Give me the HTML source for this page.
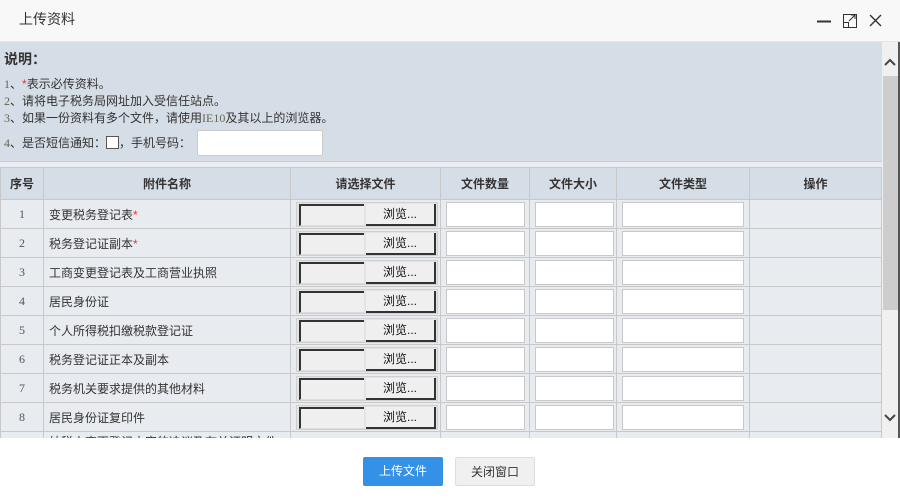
<!DOCTYPE html>
<html><head><meta charset="utf-8"><style>
*{margin:0;padding:0;box-sizing:border-box}
body{width:900px;height:498px;overflow:hidden;background:#fff;font-family:"Liberation Sans","Noto Sans CJK SC",sans-serif;font-size:12px;color:#333;position:relative}
.a{position:absolute}
.title{left:0;top:0;width:900px;height:42px;background:#f8f8f8;border-bottom:1px solid #e5e5e5}
.title span{position:absolute;left:19px;top:9px;font-size:14px;color:#333}
.info{left:0;top:42px;width:882px;height:120px;background:#d5dde6;border-bottom:1px solid #c8cdd3}
.info div{position:absolute;left:4px;font-size:12px;color:#333}
.n{font-family:"Liberation Serif",serif;color:#665}
.star{color:#e33}
.gap{left:0;top:162px;width:882px;height:276px;background:#e9ecf0}
table{position:absolute;left:0;top:167px;border-collapse:collapse;table-layout:fixed}
td,th{border:1px solid #c8c8c8;height:29px;font-size:12px;color:#333;padding:0}
th{background:#d5dde6;font-weight:bold;height:32px}
td{background:#e8ebf0}
td.c{text-align:center;font-family:"Liberation Serif",serif;color:#555}
td.l{padding-left:5px}
tr.last td{vertical-align:top;padding-top:1px}
.fb{display:block;margin-left:5px;width:142px;height:25px;border:1px solid #d0d0d0;background:#e4e4e4;position:relative}
.fb i{position:absolute;left:2px;top:1px;width:65px;height:22px;background:#efefef;border-top:2px solid #333;border-left:2px solid #333;border-bottom:1px solid #ddd}
.fb b{position:absolute;left:69px;top:1px;width:70px;height:22px;background:#efefef;border-right:2px solid #333;border-bottom:2px solid #333;font-weight:normal;text-align:center;line-height:20px;color:#111}
.in{display:block;margin-left:5px;height:25px;background:#fff;border:1px solid #c8c8c8}
.sb{left:882px;top:42px;width:18px;height:396px;background:#f0f0f0;border-right:2px solid #555}
.thumb{left:883px;top:76px;width:15px;height:234px;background:#cdcdcd}
.btn{top:457px;width:80px;height:29px;line-height:29px;text-align:center;font-size:12px;border-radius:2px}
</style></head><body>
<div class="a title"><span>上传资料</span>
<svg class="a" style="left:815px;top:12px" width="70" height="18" viewBox="0 0 70 18">
<path d="M2 9.5H16" stroke="#333" stroke-width="2"/>
<rect x="28.5" y="2.5" width="13" height="13" fill="none" stroke="#333"/>
<rect x="28.5" y="10.5" width="5" height="5" fill="#f8f8f8" stroke="#333"/>
<path d="M34 9L40 3M36 3H40V7" stroke="#333" fill="none"/>
<path d="M55 3L66 14M66 3L55 14" stroke="#333" stroke-width="1.4"/>
</svg></div>
<div class="a info">
<div style="top:7px;font-size:14px;font-weight:bold">说明：</div>
<div style="top:33px"><span class="n">1</span>、<span class="star">*</span>表示必传资料。</div>
<div style="top:50px"><span class="n">2</span>、请将电子税务局网址加入受信任站点。</div>
<div style="top:67px"><span class="n">3</span>、如果一份资料有多个文件，请使用<span class="n">IE10</span>及其以上的浏览器。</div>
<div style="top:92px"><span class="n">4</span>、是否短信通知：<span style="display:inline-block;width:13px;height:13px;background:#fff;border:1px solid #555;vertical-align:-2px"></span>，手机号码：</div>
<div style="left:197px;top:88px;width:126px;height:26px;background:#fff;border:1px solid #ccc"></div>
</div>
<div class="a gap"></div>
<table>
<colgroup><col style="width:43px"><col style="width:247px"><col style="width:150px"><col style="width:89px"><col style="width:87px"><col style="width:133px"><col style="width:132px"></colgroup>
<tr><th>序号</th><th>附件名称</th><th>请选择文件</th><th>文件数量</th><th>文件大小</th><th>文件类型</th><th>操作</th></tr>
<tr><td class="c">1</td><td class="l">变更税务登记表<span class="star">*</span></td><td><span class="fb"><i></i><b>浏览...</b></span></td><td><span class="in" style="width:79px"></span></td><td><span class="in" style="width:79px"></span></td><td><span class="in" style="width:122px"></span></td><td></td></tr>
<tr><td class="c">2</td><td class="l">税务登记证副本<span class="star">*</span></td><td><span class="fb"><i></i><b>浏览...</b></span></td><td><span class="in" style="width:79px"></span></td><td><span class="in" style="width:79px"></span></td><td><span class="in" style="width:122px"></span></td><td></td></tr>
<tr><td class="c">3</td><td class="l">工商变更登记表及工商营业执照</td><td><span class="fb"><i></i><b>浏览...</b></span></td><td><span class="in" style="width:79px"></span></td><td><span class="in" style="width:79px"></span></td><td><span class="in" style="width:122px"></span></td><td></td></tr>
<tr><td class="c">4</td><td class="l">居民身份证</td><td><span class="fb"><i></i><b>浏览...</b></span></td><td><span class="in" style="width:79px"></span></td><td><span class="in" style="width:79px"></span></td><td><span class="in" style="width:122px"></span></td><td></td></tr>
<tr><td class="c">5</td><td class="l">个人所得税扣缴税款登记证</td><td><span class="fb"><i></i><b>浏览...</b></span></td><td><span class="in" style="width:79px"></span></td><td><span class="in" style="width:79px"></span></td><td><span class="in" style="width:122px"></span></td><td></td></tr>
<tr><td class="c">6</td><td class="l">税务登记证正本及副本</td><td><span class="fb"><i></i><b>浏览...</b></span></td><td><span class="in" style="width:79px"></span></td><td><span class="in" style="width:79px"></span></td><td><span class="in" style="width:122px"></span></td><td></td></tr>
<tr><td class="c">7</td><td class="l">税务机关要求提供的其他材料</td><td><span class="fb"><i></i><b>浏览...</b></span></td><td><span class="in" style="width:79px"></span></td><td><span class="in" style="width:79px"></span></td><td><span class="in" style="width:122px"></span></td><td></td></tr>
<tr><td class="c">8</td><td class="l">居民身份证复印件</td><td><span class="fb"><i></i><b>浏览...</b></span></td><td><span class="in" style="width:79px"></span></td><td><span class="in" style="width:79px"></span></td><td><span class="in" style="width:122px"></span></td><td></td></tr>
<tr class="last"><td class="c"></td><td class="l">纳税人变更登记内容的决议及有关证明文件</td><td></td><td></td><td></td><td></td><td></td></tr>
</table>
<div class="a sb"></div>
<div class="a thumb"></div>
<svg class="a" style="left:884px;top:57px" width="12" height="10"><path d="M1 8L6 3L11 8" stroke="#444" stroke-width="2" fill="none"/></svg>
<svg class="a" style="left:884px;top:413px" width="12" height="10"><path d="M1 2L6 7L11 2" stroke="#444" stroke-width="2" fill="none"/></svg>
<div class="a" style="left:0;top:438px;width:900px;height:60px;background:#fff"></div>
<div class="a btn" style="left:363px;background:#3591e8;color:#fff">上传文件</div>
<div class="a btn" style="left:455px;background:#f0f0f0;border:1px solid #ddd;color:#333">关闭窗口</div>
</body></html>
